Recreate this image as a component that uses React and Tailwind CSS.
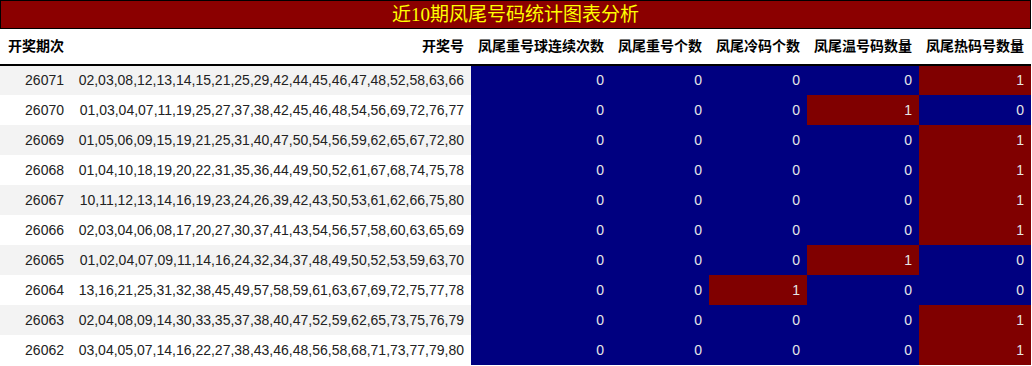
const ROWS = [
  ['26071', '02,03,08,12,13,14,15,21,25,29,42,44,45,46,47,48,52,58,63,66', [0, 0, 0, 0, 1]],
  ['26070', '01,03,04,07,11,19,25,27,37,38,42,45,46,48,54,56,69,72,76,77', [0, 0, 0, 1, 0]],
  ['26069', '01,05,06,09,15,19,21,25,31,40,47,50,54,56,59,62,65,67,72,80', [0, 0, 0, 0, 1]],
  ['26068', '01,04,10,18,19,20,22,31,35,36,44,49,50,52,61,67,68,74,75,78', [0, 0, 0, 0, 1]],
  ['26067', '10,11,12,13,14,16,19,23,24,26,39,42,43,50,53,61,62,66,75,80', [0, 0, 0, 0, 1]],
  ['26066', '02,03,04,06,08,17,20,27,30,37,41,43,54,56,57,58,60,63,65,69', [0, 0, 0, 0, 1]],
  ['26065', '01,02,04,07,09,11,14,16,24,32,34,37,48,49,50,52,53,59,63,70', [0, 0, 0, 1, 0]],
  ['26064', '13,16,21,25,31,32,38,45,49,57,58,59,61,63,67,69,72,75,77,78', [0, 0, 1, 0, 0]],
  ['26063', '02,04,08,09,14,30,33,35,37,38,40,47,52,59,62,65,73,75,76,79', [0, 0, 0, 0, 1]],
  ['26062', '03,04,05,07,14,16,22,27,38,43,46,48,56,58,68,71,73,77,79,80', [0, 0, 0, 0, 1]],
]

const STAT_COLS = [
  { label: '凤尾重号球连续次数', w: 'w-[140px]' },
  { label: '凤尾重号个数', w: 'w-[98px]' },
  { label: '凤尾冷码个数', w: 'w-[98px]' },
  { label: '凤尾温号码数量', w: 'w-[112px]' },
  { label: '凤尾热码号数量', w: 'w-[112px]' },
]

export default function App() {
  return (
    <div className="w-[1031px] bg-white font-['Liberation_Sans','Noto_Sans_CJK_SC',sans-serif] text-[14px]">
      {/* title */}
      <div className="h-[29px] border border-black bg-[#8b0000] flex items-center justify-center">
        <span className="text-[19px] leading-none text-[#ffff00] font-['Liberation_Serif','Noto_Sans_CJK_SC',serif]">
          近10期凤尾号码统计图表分析
        </span>
      </div>

      <table className="table-fixed border-collapse w-[1031px]">
        <thead>
          <tr className="h-[36px] border-b-2 border-black">
            <th className="w-[71px] pl-[8px] pr-0 text-left font-bold text-black whitespace-nowrap">开奖期次</th>
            <th className="w-[400px] px-[7px] text-right font-bold text-black whitespace-nowrap">开奖号</th>
            {STAT_COLS.map(c => (
              <th key={c.label} className={`${c.w} px-[7px] text-right font-bold text-black whitespace-nowrap`}>
                {c.label}
              </th>
            ))}
          </tr>
        </thead>
        <tbody>
          {ROWS.map(([issue, nums, stats], i) => (
            <tr key={issue} className={i % 2 === 0 ? 'h-[30px] bg-[#f3f3f3]' : 'h-[30px] bg-white'}>
              <td className="px-[7px] text-right text-[#222]">{issue}</td>
              <td className="px-[7px] text-right text-[#222] whitespace-nowrap">{nums}</td>
              {stats.map((v, j) => (
                <td
                  key={j}
                  className={v === 1
                    ? 'px-[7px] text-right text-[#e6e6e6] bg-[#800000]'
                    : 'px-[7px] text-right text-[#e6e6e6] bg-[#000080]'}
                >
                  {v}
                </td>
              ))}
            </tr>
          ))}
        </tbody>
      </table>
    </div>
  )
}
